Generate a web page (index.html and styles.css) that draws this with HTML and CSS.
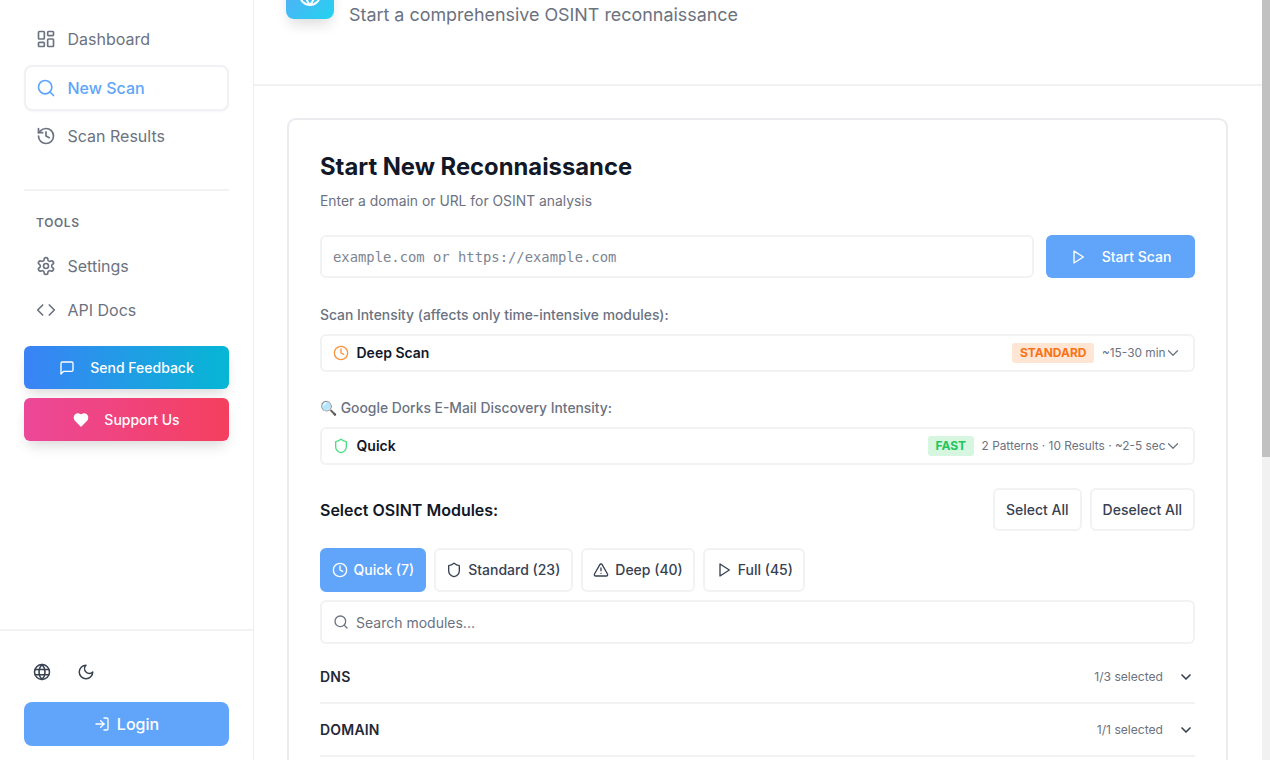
FILE: index.html
```html
<!DOCTYPE html>
<html lang="en">
<head>
    <meta charset="UTF-8">
    <title>New Scan</title>
    <link rel="stylesheet" href="styles.css">
</head>
<body>
    <svg class="sprite" xmlns="http://www.w3.org/2000/svg">
        <symbol id="i-dashboard" viewBox="0 0 24 24"><rect x="3" y="3" width="7" height="9" rx="1"/><rect x="14" y="3" width="7" height="5" rx="1"/><rect x="14" y="12" width="7" height="9" rx="1"/><rect x="3" y="16" width="7" height="5" rx="1"/></symbol>
        <symbol id="i-search" viewBox="0 0 24 24"><circle cx="11" cy="11" r="8"/><path d="m21 21-4.3-4.3"/></symbol>
        <symbol id="i-history" viewBox="0 0 24 24"><path d="M3 12a9 9 0 1 0 9-9 9.75 9.75 0 0 0-6.74 2.74L3 8"/><path d="M3 3v5h5"/><path d="M12 7v5l4 2"/></symbol>
        <symbol id="i-settings" viewBox="0 0 24 24"><path d="M12.22 2h-.44a2 2 0 0 0-2 2v.18a2 2 0 0 1-1 1.73l-.43.25a2 2 0 0 1-2 0l-.15-.08a2 2 0 0 0-2.73.73l-.22.38a2 2 0 0 0 .73 2.73l.15.1a2 2 0 0 1 1 1.72v.51a2 2 0 0 1-1 1.74l-.15.09a2 2 0 0 0-.73 2.73l.22.38a2 2 0 0 0 2.73.73l.15-.08a2 2 0 0 1 2 0l.43.25a2 2 0 0 1 1 1.73V20a2 2 0 0 0 2 2h.44a2 2 0 0 0 2-2v-.18a2 2 0 0 1 1-1.73l.43-.25a2 2 0 0 1 2 0l.15.08a2 2 0 0 0 2.73-.73l.22-.39a2 2 0 0 0-.73-2.73l-.15-.08a2 2 0 0 1-1-1.74v-.5a2 2 0 0 1 1-1.74l.15-.09a2 2 0 0 0 .73-2.73l-.22-.38a2 2 0 0 0-2.73-.73l-.15.08a2 2 0 0 1-2 0l-.43-.25a2 2 0 0 1-1-1.73V4a2 2 0 0 0-2-2z"/><circle cx="12" cy="12" r="3"/></symbol>
        <symbol id="i-code" viewBox="0 0 24 24"><path d="m16 18 6-6-6-6"/><path d="m8 6-6 6 6 6"/></symbol>
        <symbol id="i-message" viewBox="0 0 24 24"><path d="M21 15a2 2 0 0 1-2 2H7l-4 4V5a2 2 0 0 1 2-2h14a2 2 0 0 1 2 2z"/></symbol>
        <symbol id="i-heart" viewBox="0 0 24 24"><path d="M19 14c1.49-1.46 3-3.21 3-5.5A5.5 5.5 0 0 0 16.5 3c-1.76 0-3 .5-4.5 2-1.5-1.5-2.74-2-4.5-2A5.5 5.5 0 0 0 2 8.5c0 2.3 1.5 4.05 3 5.5l7 7Z" fill="currentColor"/></symbol>
        <symbol id="i-globe" viewBox="0 0 24 24"><circle cx="12" cy="12" r="10"/><path d="M12 2a14.5 14.5 0 0 0 0 20 14.5 14.5 0 0 0 0-20"/><path d="M2.8 8.5h18.4"/><path d="M2.8 15.5h18.4"/></symbol>
        <symbol id="i-moon" viewBox="0 0 24 24"><path d="M12 3a6 6 0 0 0 9 9 9 9 0 1 1-9-9Z"/></symbol>
        <symbol id="i-login" viewBox="0 0 24 24"><path d="M15 3h4a2 2 0 0 1 2 2v14a2 2 0 0 1-2 2h-4"/><path d="m10 17 5-5-5-5"/><path d="M15 12H3"/></symbol>
        <symbol id="i-play" viewBox="0 0 24 24"><path d="M6 3l14 9-14 9z"/></symbol>
        <symbol id="i-clock" viewBox="0 0 24 24"><circle cx="12" cy="12" r="10"/><path d="M12 6v6l4 2"/></symbol>
        <symbol id="i-shield" viewBox="0 0 24 24"><path d="M20 13c0 5-3.5 7.5-7.66 8.95a1 1 0 0 1-.67-.01C7.5 20.5 4 18 4 13V6a1 1 0 0 1 1-1c2 0 4.5-1.2 6.24-2.72a1.17 1.17 0 0 1 1.52 0C14.51 3.81 17 5 19 5a1 1 0 0 1 1 1z"/></symbol>
        <symbol id="i-alert" viewBox="0 0 24 24"><path d="m21.73 18-8-14a2 2 0 0 0-3.48 0l-8 14A2 2 0 0 0 4 21h16a2 2 0 0 0 1.73-3"/><path d="M12 9v4"/><path d="M12 17h.01"/></symbol>
        <symbol id="i-chevron" viewBox="0 0 24 24"><path d="m6 9 6 6 6-6"/></symbol>
    </svg>

    <aside class="sidebar">
        <nav class="nav">
            <a class="nav-item"><svg class="icon"><use href="#i-dashboard"/></svg>Dashboard</a>
            <a class="nav-item active"><svg class="icon"><use href="#i-search"/></svg>New Scan</a>
            <a class="nav-item"><svg class="icon"><use href="#i-history"/></svg>Scan Results</a>
        </nav>
        <hr class="nav-divider">
        <div class="nav-title">TOOLS</div>
        <nav class="nav tools">
            <a class="nav-item"><svg class="icon"><use href="#i-settings"/></svg>Settings</a>
            <a class="nav-item"><svg class="icon"><use href="#i-code"/></svg>API Docs</a>
        </nav>
        <div class="side-actions">
            <button class="side-btn feedback"><svg class="icon"><use href="#i-message"/></svg>Send Feedback</button>
            <button class="side-btn support"><svg class="icon"><use href="#i-heart"/></svg>Support Us</button>
        </div>
        <div class="side-footer">
            <div class="side-toggles">
                <svg class="icon"><use href="#i-globe"/></svg>
                <svg class="icon"><use href="#i-moon"/></svg>
            </div>
            <button class="login-btn"><svg class="icon"><use href="#i-login"/></svg>Login</button>
        </div>
    </aside>

    <main class="main">
        <header class="page-head">
            <div class="logo"><svg class="icon"><use href="#i-globe"/></svg></div>
            <p>Start a comprehensive OSINT reconnaissance</p>
        </header>
        <div class="content">
            <section class="card">
                <h2>Start New Reconnaissance</h2>
                <p class="card-sub">Enter a domain or URL for OSINT analysis</p>

                <div class="scan-row">
                    <input class="url-input" type="text" placeholder="example.com or https://example.com">
                    <button class="start-btn"><svg class="icon"><use href="#i-play"/></svg>Start Scan</button>
                </div>

                <label class="field-label">Scan Intensity (affects only time-intensive modules):</label>
                <div class="select">
                    <svg class="icon orange"><use href="#i-clock"/></svg>
                    <span class="select-name">Deep Scan</span>
                    <span class="badge badge-orange">STANDARD</span>
                    <span class="select-meta">~15-30 min</span>
                    <svg class="icon chev"><use href="#i-chevron"/></svg>
                </div>

                <label class="field-label second">🔍 Google Dorks E-Mail Discovery Intensity:</label>
                <div class="select">
                    <svg class="icon green"><use href="#i-shield"/></svg>
                    <span class="select-name">Quick</span>
                    <span class="badge badge-green">FAST</span>
                    <span class="select-meta">2 Patterns · 10 Results · ~2-5 sec</span>
                    <svg class="icon chev"><use href="#i-chevron"/></svg>
                </div>

                <div class="modules-head">
                    <h3>Select OSINT Modules:</h3>
                    <div class="modules-actions">
                        <button class="btn">Select All</button>
                        <button class="btn">Deselect All</button>
                    </div>
                </div>

                <div class="tabs">
                    <button class="btn tab active"><svg class="icon"><use href="#i-clock"/></svg>Quick (7)</button>
                    <button class="btn tab"><svg class="icon"><use href="#i-shield"/></svg>Standard (23)</button>
                    <button class="btn tab"><svg class="icon"><use href="#i-alert"/></svg>Deep (40)</button>
                    <button class="btn tab"><svg class="icon"><use href="#i-play"/></svg>Full (45)</button>
                </div>

                <div class="search">
                    <svg class="icon"><use href="#i-search"/></svg>
                    <input type="text" placeholder="Search modules...">
                </div>

                <div class="group">
                    <span class="group-name">DNS</span>
                    <span class="group-count">1/3 selected</span>
                    <svg class="icon"><use href="#i-chevron"/></svg>
                </div>
                <div class="group">
                    <span class="group-name">DOMAIN</span>
                    <span class="group-count">1/1 selected</span>
                    <svg class="icon"><use href="#i-chevron"/></svg>
                </div>
            </section>
        </div>
    </main>

    <div class="scrollbar"><div class="scrollbar-thumb"></div></div>
</body>
</html>
```

FILE: styles.css
```css
* {
    box-sizing: border-box;
}
html, body {
    height: 100%;
}
body {
    margin: 0;
    display: flex;
    height: 760px;
    overflow: hidden;
    background-color: #fff;
    color: #111827;
    font-family: Inter, "Noto Sans", sans-serif;
}
button {
    font-family: inherit;
    cursor: pointer;
}
.sprite {
    display: none;
}
.icon {
    fill: none;
    stroke: currentColor;
    stroke-width: 2;
    stroke-linecap: round;
    stroke-linejoin: round;
    flex-shrink: 0;
}

/* sidebar */
.sidebar {
    width: 254px;
    flex-shrink: 0;
    display: flex;
    flex-direction: column;
    padding-top: 16px;
    border-right: 1px solid #eceef1;
}
.nav {
    display: flex;
    flex-direction: column;
    gap: 2.5px;
    margin: 0 24px;
}
.nav-item {
    display: flex;
    align-items: center;
    gap: 11.5px;
    height: 46px;
    padding: 0 10px;
    color: #6b7280;
    font-size: 16px;
    border: 2px solid transparent;
    border-radius: 8px;
}
.nav-item .icon {
    width: 20px;
    height: 20px;
}
.nav-item.active {
    color: #60a5fa;
    font-weight: 500;
    border-color: #f0f1f4;
    box-shadow: 0 1px 2px rgba(0, 0, 0, 0.04);
}
.nav-divider {
    margin: 30px 24px 0;
    border: none;
    border-top: 2px solid #f1f2f4;
}
.nav-title {
    margin: 24px 36px 0;
    color: #6b7280;
    font-size: 12px;
    font-weight: 600;
    letter-spacing: 0.6px;
    line-height: 15px;
}
.tools {
    margin-top: 14px;
    gap: 0;
}
.tools .nav-item {
    height: 44px;
}
.side-actions {
    display: flex;
    flex-direction: column;
    gap: 9px;
    margin: 14px 24px 0;
}
.side-btn {
    display: flex;
    align-items: center;
    justify-content: center;
    gap: 15px;
    height: 43px;
    padding-bottom: 1px;
    border: none;
    border-radius: 6px;
    color: #fff;
    font-size: 14px;
    font-weight: 500;
    box-shadow: 0 8px 14px -4px rgba(0, 0, 0, 0.16);
}
.side-btn .icon {
    width: 16px;
    height: 16px;
}
.feedback {
    background: linear-gradient(90deg, #3b82f6, #06b6d4);
}
.support {
    background: linear-gradient(90deg, #ec4899, #f43f5e);
}
.side-footer {
    margin-top: auto;
    padding: 0 24px 14px;
    border-top: 2px solid #f1f2f4;
}
.side-toggles {
    display: flex;
    gap: 26px;
    padding: 32px 0 21px 9px;
    color: #374151;
}
.side-toggles .icon {
    width: 18px;
    height: 18px;
}
.login-btn {
    display: flex;
    align-items: center;
    justify-content: center;
    gap: 7px;
    width: 100%;
    height: 44px;
    border: none;
    border-radius: 8px;
    background-color: #60a5fa;
    color: #fff;
    font-size: 16px;
    font-weight: 500;
}
.login-btn .icon {
    width: 16px;
    height: 16px;
}

/* main column */
.main {
    flex: 1;
    min-width: 0;
    height: 760px;
    overflow: hidden;
}
.page-head {
    display: flex;
    gap: 15px;
    height: 115px;
    margin-top: -29px;
    padding-left: 32px;
    border-bottom: 2px solid #f1f2f4;
}
.logo {
    display: flex;
    align-items: center;
    justify-content: center;
    width: 48px;
    height: 48px;
    border-radius: 8px;
    background: linear-gradient(135deg, #60a5fa, #22d3ee);
    color: #fff;
    box-shadow: 0 8px 14px -3px rgba(0, 0, 0, 0.14);
}
.logo .icon {
    width: 24px;
    height: 24px;
}
.page-head p {
    margin: 30px 0 0;
    color: #6b7280;
    font-size: 17.9px;
    line-height: 28px;
}
.content {
    padding: 32px 34px 32px 33px;
}
.card {
    padding: 31px;
    border: 2px solid #e9ebef;
    border-radius: 9px;
}
.card h2 {
    margin: 0;
    font-size: 23.8px;
    line-height: 32px;
    font-weight: 700;
}
.card-sub {
    margin: 8px 0 0;
    color: #6b7280;
    font-size: 13.87px;
    line-height: 20px;
}

/* url row */
.scan-row {
    display: flex;
    gap: 12px;
    margin-top: 24px;
}
.url-input {
    flex: 1;
    min-width: 0;
    height: 43px;
    padding: 0 11px;
    border: 2px solid #f1f2f4;
    border-radius: 6px;
    font-family: "DejaVu Sans Mono", monospace;
    font-size: 13.85px;
    outline: none;
}
.url-input::placeholder {
    color: #7d8592;
}
.start-btn {
    display: flex;
    align-items: center;
    justify-content: center;
    gap: 16px;
    width: 149px;
    height: 43px;
    border: none;
    border-radius: 6px;
    background-color: #60a5fa;
    color: #fff;
    font-size: 14px;
    font-weight: 500;
}
.start-btn .icon {
    width: 16px;
    height: 16px;
}

/* selects */
.field-label {
    display: block;
    margin-top: 27px;
    color: #6b7280;
    font-size: 13.87px;
    font-weight: 500;
    line-height: 20px;
}
.field-label.second {
    margin-top: 26px;
}
.select {
    display: flex;
    align-items: center;
    height: 38px;
    margin-top: 9px;
    padding: 0 14.5px 0 11px;
    border: 2px solid #f1f2f4;
    border-radius: 6px;
}
.select > .icon {
    width: 16px;
    height: 16px;
}
.orange {
    color: #fb923c;
}
.green {
    color: #4ade80;
}
.select-name {
    flex: 1;
    margin-left: 7.5px;
    padding-bottom: 1px;
    font-size: 14px;
    font-weight: 600;
}
.badge {
    padding: 0 7.5px;
    margin-right: 8px;
    border-radius: 3px;
    font-size: 12px;
    font-weight: 700;
    line-height: 20px;
}
.badge-orange {
    background-color: #ffe6d4;
    color: #f97316;
}
.badge-green {
    background-color: #d6f6e0;
    color: #22c55e;
}
.select-meta {
    color: #6b7280;
    font-size: 11.85px;
}
.select > .chev {
    width: 18px;
    height: 18px;
    margin: 0 -3px 0 -2px;
    color: #6b7280;
    stroke-width: 1.6;
}

/* modules */
.modules-head {
    display: flex;
    align-items: center;
    justify-content: space-between;
    margin-top: 23px;
}
.modules-head h3 {
    margin: 0;
    font-size: 16px;
    font-weight: 600;
}
.modules-actions {
    display: flex;
    gap: 8px;
}
.btn {
    height: 43px;
    padding: 0 11px;
    border: 2px solid #f1f2f4;
    border-radius: 6px;
    background-color: #fff;
    color: #374151;
    font-size: 14px;
    font-weight: 500;
}
.tabs {
    display: flex;
    gap: 8px;
    margin-top: 17px;
}
.tab {
    display: flex;
    align-items: center;
    gap: 6px;
    height: 44px;
    padding: 0 10.5px 1px;
}
.tab .icon {
    width: 16px;
    height: 16px;
}
.tab.active {
    border-color: #60a5fa;
    background-color: #60a5fa;
    color: #fff;
    padding: 0 9.5px 1px;
}
.search {
    display: flex;
    align-items: center;
    gap: 7px;
    height: 44px;
    margin: 8px 0 7px;
    padding: 0 11px;
    border: 2px solid #f1f2f4;
    border-radius: 6px;
    color: #6b7280;
}
.search .icon {
    width: 16px;
    height: 16px;
}
.search input {
    flex: 1;
    padding: 0;
    border: none;
    outline: none;
    font-family: inherit;
    font-size: 14px;
}
.search input::placeholder {
    color: #6b7280;
}
.group {
    display: flex;
    align-items: center;
    height: 53px;
    padding-right: 1px;
    border-bottom: 2px solid #f1f2f4;
}
.group-name {
    flex: 1;
    font-size: 14px;
    font-weight: 600;
    letter-spacing: 0.2px;
    color: #1f2937;
}
.group-count {
    margin-right: 15px;
    color: #6b7280;
    font-size: 12.1px;
}
.group .icon {
    width: 16px;
    height: 16px;
    color: #374151;
    stroke-width: 2.5;
}

/* scrollbar */
.scrollbar {
    width: 8px;
    flex-shrink: 0;
    background-color: #f1f1f1;
}
.scrollbar-thumb {
    height: 457px;
    background-color: #c1c1c1;
}
```
